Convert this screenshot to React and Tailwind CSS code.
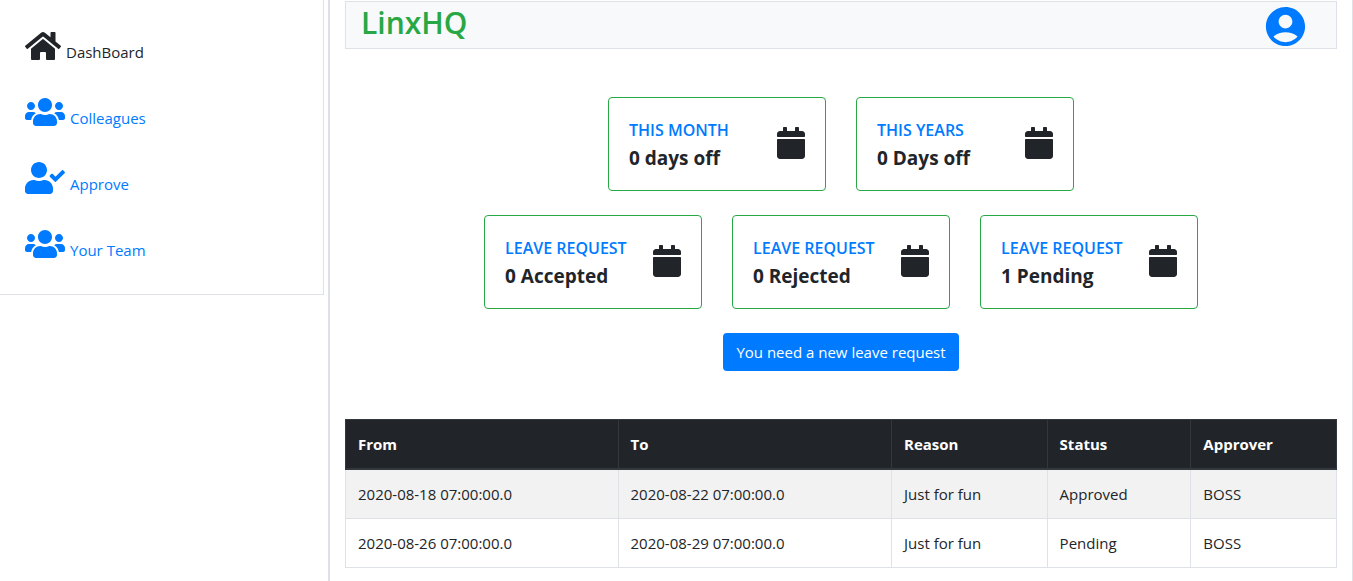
import { FaHome, FaUsers, FaUserCheck, FaCalendar } from "react-icons/fa";
import { MdAccountCircle } from "react-icons/md";

const links = [
  { label: "Colleagues", Icon: FaUsers },
  { label: "Approve", Icon: FaUserCheck },
  { label: "Your Team", Icon: FaUsers },
];

const periods = [
  { title: "THIS MONTH", value: "0 days off" },
  { title: "THIS YEARS", value: "0 Days off" },
];

const requests = [
  { title: "LEAVE REQUEST", value: "0 Accepted" },
  { title: "LEAVE REQUEST", value: "0 Rejected" },
  { title: "LEAVE REQUEST", value: "1 Pending" },
];

const rows = [
  ["2020-08-18 07:00:00.0", "2020-08-22 07:00:00.0", "Just for fun", "Approved", "BOSS"],
  ["2020-08-26 07:00:00.0", "2020-08-29 07:00:00.0", "Just for fun", "Pending", "BOSS"],
];

const columns = [
  { name: "From", width: "w-[27.5%]" },
  { name: "To", width: "w-[27.6%]" },
  { name: "Reason", width: "w-[15.7%]" },
  { name: "Status", width: "w-[14.5%]" },
  { name: "Approver", width: "w-[14.7%]" },
];

function StatCard({ title, value }) {
  return (
    <div className="flex w-[218px] items-center justify-between rounded border border-[#28a745] px-5 py-[18px]">
      <div>
        <h2 className="text-base leading-7 font-semibold text-[#007bff]">{title}</h2>
        <p className="text-[19px] leading-7 font-bold">{value}</p>
      </div>
      <FaCalendar className="mb-0.5 h-8 w-7" aria-hidden="true" />
    </div>
  );
}

function CardRow({ cards }) {
  return (
    <div className="flex flex-wrap justify-center gap-x-[30px] gap-y-6">
      {cards.map((card) => (
        <StatCard key={card.value} title={card.title} value={card.value} />
      ))}
    </div>
  );
}

export default function App() {
  return (
    <div className="flex min-h-screen bg-white font-['Open_Sans',sans-serif] text-[15px] leading-6 text-[#212529]">
      <aside className="w-[328px] shrink-0 pr-1">
        <nav className="flex flex-col gap-8 border-r border-b border-[#dee2e6] pt-[30px] pb-8 pl-[25px]">
          <div className="flex items-end gap-[5px]">
            <FaHome className="mb-0.5 h-8 w-9" aria-hidden="true" />
            <span>DashBoard</span>
          </div>
          {links.map(({ label, Icon }) => (
            <a key={label} href="#" className="flex items-end gap-[5px] self-start text-[#007bff]">
              <Icon className="mb-0.5 h-8 w-10" aria-hidden="true" />
              <span>{label}</span>
            </a>
          ))}
        </nav>
      </aside>

      <main className="min-w-0 flex-1 border-r border-l-2 border-[#dee2e6] px-[15px] pt-px">
        <header className="flex h-12 items-center justify-between border border-[#dee2e6] bg-[#f8f9fa] pr-[27px] pl-[15px]">
          <h1 className="pb-1 text-[30px] leading-9 font-semibold text-[#28a745]">LinxHQ</h1>
          <a href="#" aria-label="Account" className="pt-[3px] text-[#007bff]">
            <MdAccountCircle className="size-[47px]" aria-hidden="true" />
          </a>
        </header>

        <section className="mt-12 flex flex-col items-center gap-6">
          <CardRow cards={periods} />
          <CardRow cards={requests} />
          <button type="button" className="rounded bg-[#007bff] px-[13px] py-[7px] text-white">
            You need a new leave request
          </button>
        </section>

        <table className="mt-12 w-full table-fixed border-collapse text-left">
          <thead className="bg-[#212529] text-white">
            <tr>
              {columns.map(({ name, width }) => (
                <th key={name} scope="col" className={`${width} border border-b-2 border-[#32383e] p-3 font-bold`}>
                  {name}
                </th>
              ))}
            </tr>
          </thead>
          <tbody>
            {rows.map((row) => (
              <tr key={row[0]} className="odd:bg-[#f2f2f2]">
                {row.map((cell, i) => (
                  <td key={columns[i].name} className="border border-[#dee2e6] p-3">
                    {cell}
                  </td>
                ))}
              </tr>
            ))}
          </tbody>
        </table>
      </main>
    </div>
  );
}
